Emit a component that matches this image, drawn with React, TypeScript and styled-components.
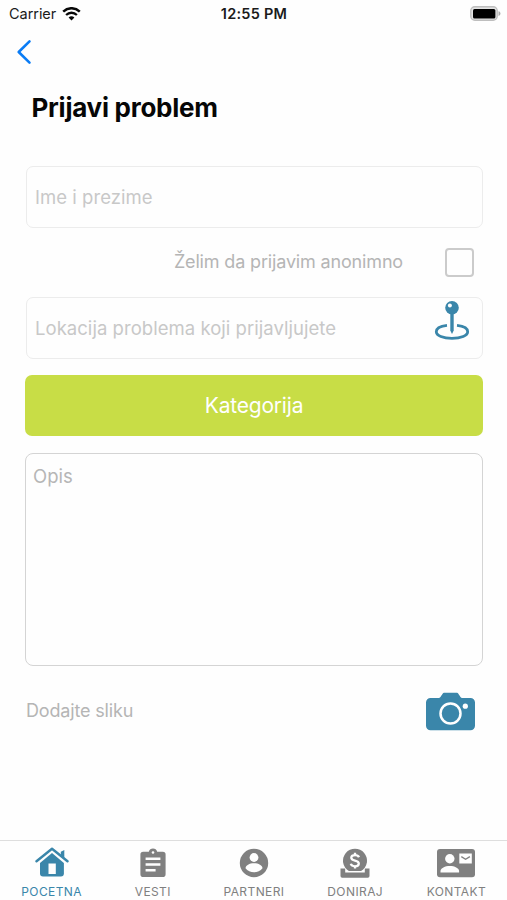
import React from "react";
import styled, { createGlobalStyle } from "styled-components";

const blue = "#3a86aa";
const gray = "#808080";

const GlobalStyle = createGlobalStyle`
  *, *::before, *::after { box-sizing: border-box; }
  body { margin: 0; background: #fefefe; }
  input, textarea, button { font: inherit; letter-spacing: inherit; }
`;

const Screen = styled.div`
  display: flex;
  flex-direction: column;
  width: 507px;
  height: 900px;
  overflow: hidden;
  background: #fefefe;
  font-family: Inter, "Liberation Sans", sans-serif;
  font-size: 18.5px;
  letter-spacing: 0.04px;
`;

const StatusBar = styled.header`
  display: grid;
  grid-template-columns: 1fr auto 1fr;
  align-items: center;
  height: 27px;
  padding: 0 6px 0 9px;
  color: #1b1b1b;
  font-size: 14.5px;
`;

const Carrier = styled.div`
  display: flex;
  align-items: center;
  gap: 6px;
  letter-spacing: -0.05px;
`;

const Clock = styled.div`
  padding-right: 2px;
  font-weight: 600;
  letter-spacing: 0.25px;
`;

const BatterySlot = styled.div`
  display: flex;
  justify-content: flex-end;
`;

const NavBar = styled.nav`
  display: flex;
  align-items: center;
  height: 50px;
  padding-left: 16px;
`;

const BackButton = styled.button`
  display: flex;
  padding: 0;
  border: 0;
  background: none;
`;

const Title = styled.h1`
  margin: 0;
  height: 89px;
  padding: 14px 0 0 31.5px;
  color: #060606;
  font-size: 26px;
  line-height: 34px;
  font-weight: 700;
  letter-spacing: -0.26px;
`;

const Form = styled.main`
  display: flex;
  flex: 1;
  flex-direction: column;
  padding: 0 24px 0 26px;
`;

const Field = styled.div`
  display: flex;
  justify-content: space-between;
  width: 457px;
  height: 62px;
  padding: 0 12px 0 8px;
  border: 1px solid #ececec;
  border-radius: 7px;
`;

const FieldInput = styled.input`
  flex: 1;
  min-width: 0;
  padding: 0;
  border: 0;
  outline: 0;
  background: none;
  &::placeholder { color: #c8c8c8; opacity: 1; }
`;

const AnonymousRow = styled.label`
  display: flex;
  align-items: center;
  justify-content: flex-end;
  gap: 42px;
  height: 69px;
  padding-right: 9px;
`;

const Caption = styled.span`
  padding-bottom: 2px;
  color: #b5b5b5;
  font-size: 18px;
  letter-spacing: -0.16px;
`;

const Checkbox = styled.input`
  appearance: none;
  width: 29px;
  height: 29px;
  margin: 0;
  border: 2px solid #cbcbcb;
  border-radius: 4px;
`;

const CategoryButton = styled.button`
  width: 458px;
  height: 61px;
  margin: 16px 0 17px -1px;
  padding: 0;
  border: 0;
  border-radius: 7px;
  background: #c8dd46;
  color: #fff;
  font-size: 21px;
  letter-spacing: -0.2px;
`;

const Description = styled.textarea`
  display: block;
  width: 458px;
  height: 213px;
  margin-left: -1px;
  padding: 10px 7px;
  border: 1.5px solid #d4d4d4;
  border-radius: 8px;
  outline: 0;
  background: none;
  line-height: 24px;
  resize: none;
  &::placeholder { color: #b6b6b6; opacity: 1; }
`;

const PhotoRow = styled.div`
  display: flex;
  align-items: center;
  justify-content: space-between;
  height: 90px;
  padding-right: 8px;
`;

const TabBar = styled.nav`
  display: grid;
  grid-template-columns: repeat(5, 1fr);
  height: 60px;
  padding-left: 1px;
  border-top: 1px solid #dedede;
`;

const Tab = styled.a<{ $active?: boolean }>`
  display: flex;
  flex-direction: column;
  align-items: center;
  padding-top: 5px;
  gap: 3px;
  color: ${(p) => (p.$active ? blue : gray)};
  font-size: 12px;
  line-height: 17px;
  letter-spacing: 0.4px;
`;

const WifiIcon = () => (
  <svg width="19" height="14" viewBox="0 0 19 14" fill="none" stroke="#080808">
    <path d="M1.2 4.6C6 .1 13 .1 17.8 4.6" strokeWidth="2.5" />
    <path d="M4.1 8c3.1-3 7.7-3 10.8 0" strokeWidth="2.3" />
    <path d="M9.5 13.4 6.6 10.5c1.7-1.6 4.1-1.6 5.8 0z" fill="#080808" stroke="none" />
  </svg>
);

const BatteryIcon = () => (
  <svg width="31" height="15" viewBox="0 0 31 15">
    <rect x=".8" y=".8" width="26.4" height="13.4" rx="4" fill="#e4e4e4" stroke="#bebebe" strokeWidth="1.4" />
    <rect x="3" y="3" width="22.4" height="9.4" rx="1.5" fill="#000" />
    <path d="M28.5 5.2c2.6.7 2.6 4 0 4.7z" fill="#aaa" />
  </svg>
);

const BackIcon = () => (
  <svg width="16" height="26" viewBox="0 0 16 26" fill="none" stroke="#0a7cf5" strokeWidth="2.6" strokeLinecap="round" strokeLinejoin="round">
    <path d="M13.5 2.4 2.7 13l10.8 10.6" />
  </svg>
);

const PinIcon = () => (
  <svg width="36" height="44" viewBox="0 0 36 44">
    <path d="M13 27.3C6.400 28 2.300 30.500 2.300 33.700c0 3.900 6.800 6.700 15.700 6.700s15.700-2.800 15.700-6.700c0-3.200-4.100-5.700-10.700-6.400" fill="none" stroke={blue} strokeWidth="2.8" />
    <path d="M16.3 14h3.400v18.500L18 36l-1.700-3.500z" fill={blue} />
    <circle cx="18" cy="9.700" r="6.800" fill={blue} />
    <circle cx="15.900" cy="7.500" r="2" fill="#fefefe" />
  </svg>
);

const CameraIcon = () => (
  <svg width="49" height="39" viewBox="0 0 49 39">
    <path d="M4.500 6H13c1.800 0 3-4.800 5-5.300h13c2 .5 3.200 5.300 5 5.300h8.500a4.500 4.500 0 0 1 4.500 4.500v23.300a4.500 4.500 0 0 1-4.500 4.500h-40A4.500 4.500 0 0 1 0 33.800V10.500A4.500 4.500 0 0 1 4.500 6z" fill={blue} />
    <circle cx="24.500" cy="21.500" r="10" fill="none" stroke="#fefefe" strokeWidth="2.500" />
    <circle cx="39.300" cy="14.200" r="2.600" fill="#fefefe" />
  </svg>
);

const HouseIcon = () => (
  <svg width="34" height="34" viewBox="0 0 34 34" fill={blue}>
    <path d="M17 6.900 28.900 17v10.500a3 3 0 0 1-3 3H8a3 3 0 0 1-3-3V17z" />
    <path d="M1.500 15.300 17 2.700l15.500 12.600" fill="none" stroke={blue} strokeWidth="2.400" strokeLinecap="round" strokeLinejoin="round" />
    <path d="M25.800 5.700 29.300 4v8l-3.500-2.900z" />
    <path d="M13.500 17.500h7.300V28h-7.300z" fill="#fefefe" />
  </svg>
);

const ClipboardIcon = () => (
  <svg width="34" height="34" viewBox="0 0 34 34">
    <path d="M7.200 5.700h5.600a4.400 4.400 0 0 1 8.400 0h5.600a2.800 2.800 0 0 1 2.800 2.800v19.700a2.800 2.800 0 0 1-2.800 2.800H7.200a2.800 2.800 0 0 1-2.800-2.800V8.500a2.800 2.800 0 0 1 2.800-2.800z" fill={gray} />
    <circle cx="17" cy="6.500" r="1.300" fill="#fefefe" />
    <path d="M9.600 12.800h14.800M9.600 18.500h14.800M9.600 24.200h10" stroke="#fefefe" strokeWidth="2.500" />
  </svg>
);

const PersonIcon = () => (
  <svg width="34" height="34" viewBox="0 0 34 34">
    <circle cx="17" cy="17" r="14.200" fill={gray} />
    <circle cx="17" cy="11.500" r="4.400" fill="#fefefe" />
    <path d="M8.500 22.300c0-2.900 4-5 8.500-5s8.500 2.100 8.500 5c-4 5.300-13 5.300-17 0z" fill="#fefefe" />
  </svg>
);

const DonateIcon = () => (
  <svg width="34" height="34" viewBox="0 0 34 34">
    <path d="M2.500 22.600h4.700v3.900h19.600v-3.900h4.700v7.400a1.700 1.700 0 0 1-1.700 1.700H4.200A1.700 1.700 0 0 1 2.500 30z" fill={gray} />
    <path d="M10.900 25a12 12 0 1 1 12.200 0z" fill={gray} />
    <path d="M21 11.200c-.7-1.500-2-2.100-4-2.100-2.300 0-3.700 1-3.700 2.600 0 4 7.500 1.600 7.500 5.800 0 1.700-1.400 2.800-3.800 2.800-2.300 0-3.700-.8-4.200-2.500M17 6.700V9M17 20.300v2.300" fill="none" stroke="#fefefe" strokeWidth="2.300" />
  </svg>
);

const ContactIcon = () => (
  <svg width="38" height="34" viewBox="0 0 38 34">
    <rect y="3" width="38" height="28.300" rx="3" fill={gray} />
    <circle cx="12.800" cy="12.800" r="4.700" fill="#fefefe" />
    <path d="M3.500 26.500v-1.400c0-2.900 4.600-5 9.300-5s9.300 2.100 9.300 5v1.400z" fill="#fefefe" />
    <path d="M22.300 7.500h12.500v10H22.300z" fill="#fefefe" />
    <path d="m24.300 10.600 4.300 2.600 4.300-2.600" fill="none" stroke={gray} strokeWidth="1.300" />
  </svg>
);

const tabs = [
  { label: "POCETNA", Icon: HouseIcon, active: true },
  { label: "VESTI", Icon: ClipboardIcon },
  { label: "PARTNERI", Icon: PersonIcon },
  { label: "DONIRAJ", Icon: DonateIcon },
  { label: "KONTAKT", Icon: ContactIcon },
];

export default function App() {
  return (
    <Screen>
      <GlobalStyle />
      <StatusBar>
        <Carrier><span>Carrier</span><WifiIcon /></Carrier>
        <Clock>12:55 PM</Clock>
        <BatterySlot><BatteryIcon /></BatterySlot>
      </StatusBar>
      <NavBar><BackButton aria-label="Nazad"><BackIcon /></BackButton></NavBar>
      <Title>Prijavi problem</Title>
      <Form>
        <Field><FieldInput placeholder="Ime i prezime" /></Field>
        <AnonymousRow>
          <Caption>Želim da prijavim anonimno</Caption>
          <Checkbox type="checkbox" />
        </AnonymousRow>
        <Field>
          <FieldInput placeholder="Lokacija problema koji prijavljujete" />
          <PinIcon />
        </Field>
        <CategoryButton>Kategorija</CategoryButton>
        <Description placeholder="Opis" />
        <PhotoRow><Caption>Dodajte sliku</Caption><CameraIcon /></PhotoRow>
      </Form>
      <TabBar>
        {tabs.map(({ label, Icon, active }) => (
          <Tab key={label} $active={active}>
            <Icon />
            <span>{label}</span>
          </Tab>
        ))}
      </TabBar>
    </Screen>
  );
}
